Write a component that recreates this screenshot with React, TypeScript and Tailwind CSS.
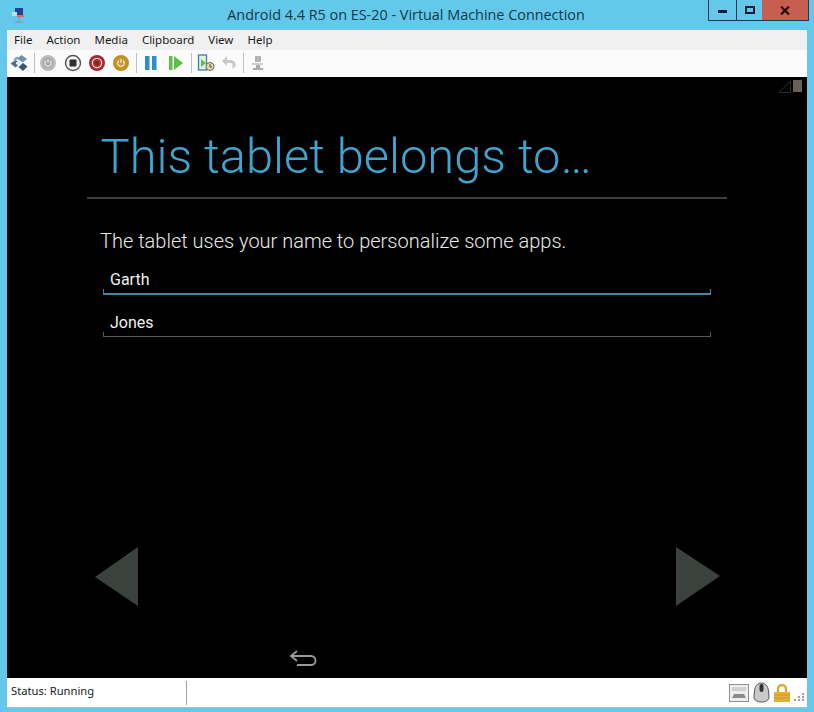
import React from 'react';

const menus = ['File', 'Action', 'Media', 'Clipboard', 'View', 'Help'];

function Separator() {
  return <div className="w-px h-[20px] bg-[#b9c4c9]" />;
}

function PowerIcon({ outer, inner, stroke }: { outer: string; inner: string; stroke: string }) {
  return (
    <svg width="18" height="18" viewBox="0 0 18 18">
      <circle cx="9" cy="9" r="8" fill={outer} />
      <circle cx="9" cy="9" r="5.5" fill={inner} />
      <path d="M6.8 6.8a3.2 3.2 0 1 0 4.4 0" fill="none" stroke={stroke} strokeWidth="1.2" />
      <path d="M9 5v4" stroke={stroke} strokeWidth="1.2" />
    </svg>
  );
}

function Toolbar() {
  return (
    <div className="h-[27px] flex items-center pl-[3px] pb-[2px] bg-[#fbfbfb]">
      {/* host */}
      <svg width="18" height="18" viewBox="0 0 18 18">
        <path d="M0.500 9.500l5-3.500 4.500 3.500-4.500 4z" fill="#4d7086" />
        <path d="M7 4.500l4.500-3.500 5.500 4-4.500 3.500z" fill="#6f95aa" />
        <path d="M8.500 13l4.500-4 4.500 3.500-4.500 4.500z" fill="#39586c" />
        <path d="M3.500 5L7 2.500l2 1.500-4 3z" fill="#86a6b8" />
        <path d="M6 8.500l2.500-1.500 2.500 2-2.500 2.500-2.500-1.500z" fill="#e6edf0" />
      </svg>
      <div className="ml-[6px] mr-[4px]"><Separator /></div>
      <div className="w-[18px] h-[18px]">
        <PowerIcon outer="#bdbdbd" inner="#a9a9a9" stroke="#e6e6e6" />
      </div>
      <div className="ml-[7px]">
        <svg width="18" height="18" viewBox="0 0 18 18">
          <circle cx="9" cy="9" r="7.500" fill="#f4f4f4" stroke="#555" strokeWidth="1.400" />
          <rect x="5.500" y="5.500" width="7" height="7" rx="1" fill="#2f2f2f" />
        </svg>
      </div>
      <div className="ml-[6px]">
        <svg width="18" height="18" viewBox="0 0 18 18">
          <circle cx="9" cy="9" r="8" fill="#a82a2a" />
          <circle cx="9" cy="9" r="4.600" fill="none" stroke="#f0dcdc" strokeWidth="1.300" />
          <circle cx="9" cy="9" r="2" fill="#8e1f1f" />
        </svg>
      </div>
      <div className="ml-[6px]">
        <PowerIcon outer="#c08f2b" inner="#c9992f" stroke="#f6ecc9" />
      </div>
      <div className="ml-[6px] mr-[7px]"><Separator /></div>
      <svg width="14" height="16" viewBox="0 0 14 16">
        <rect x="1" y="1" width="4.500" height="14" fill="#2f8fc4" />
        <rect x="8" y="1" width="4.500" height="14" fill="#2f8fc4" />
      </svg>
      <div className="ml-[10px]">
        <svg width="16" height="16" viewBox="0 0 16 16">
          <rect x="1" y="1" width="3.500" height="14" fill="#5cc04a" />
          <path d="M6 1l9 7-9 7z" fill="#5cc04a" />
        </svg>
      </div>
      <div className="ml-[7px] mr-[5px]"><Separator /></div>
      <svg width="18" height="18" viewBox="0 0 18 18">
        <rect x="1.500" y="1" width="8" height="15" fill="#e3f0ea" stroke="#3b7f9c" strokeWidth="1.300" />
        <path d="M4 5l5 4-5 4z" fill="#5cc04a" />
        <circle cx="13" cy="12.500" r="4" fill="#e3d9b8" stroke="#6b6b5b" />
        <path d="M13 10v3h2" fill="none" stroke="#444" />
      </svg>
      <div className="ml-[5px]">
        <svg width="18" height="18" viewBox="0 0 18 18">
          <path d="M7 2L2 7l5 5V9h3c2.500 0 3 2 2.500 6 3-2 4-3.500 3-6-.8-2-3-3-5.500-3H7z" fill="#c9c9c9" />
        </svg>
      </div>
      <div className="ml-[5px] mr-[5px]"><Separator /></div>
      <svg width="18" height="18" viewBox="0 0 18 18">
        <path d="M6 2h6v6H6z" fill="#b5b5b5" />
        <path d="M3 9h11v2H3z" fill="#cfcfcf" />
        <path d="M7 11h4v3h3v2H4v-2h3z" fill="#a9a9a9" />
      </svg>
    </div>
  );
}

function StatusIcons() {
  return (
    <div className="flex items-end gap-[3px] mr-[2px]">
      <svg width="20" height="20" viewBox="0 0 20 20" className="mr-[1px]">
        <rect x="0.500" y="1.500" width="19" height="17" fill="#eeeeee" stroke="#8f8f8f" />
        <path d="M3 4h14v4H3z" fill="#d0d0d0" />
        <path d="M5 11h10l2 4H3z" fill="#8a8a8a" />
      </svg>
      <svg width="17" height="21" viewBox="0 0 17 21">
        <path d="M8.500 1c4 0 6.500 3 7 8l.5 6c0 3-3 5-7.500 5S1 18 1 15l.5-6c.5-5 3-8 7-8z" fill="#c9c9c9" stroke="#555" />
        <rect x="6.500" y="2" width="4" height="8" rx="2" fill="#333" />
      </svg>
      <svg width="18" height="20" viewBox="0 0 18 20">
        <path d="M5 9V6a4 4 0 0 1 8 0v3" fill="none" stroke="#d9a92f" strokeWidth="2.400" />
        <rect x="1" y="9" width="16" height="10" fill="#e3b23a" />
        <path d="M1 12h16M1 15h16" stroke="#c8962a" />
      </svg>
      <div className="grid grid-cols-3 gap-[1px] w-[11px] mb-[2px]">
        <span /><span /><span className="w-[2px] h-[2px] bg-[#a0a0a0]" />
        <span /><span className="w-[2px] h-[2px] bg-[#a0a0a0]" /><span className="w-[2px] h-[2px] bg-[#a0a0a0]" />
        <span className="w-[2px] h-[2px] bg-[#a0a0a0]" /><span className="w-[2px] h-[2px] bg-[#a0a0a0]" /><span className="w-[2px] h-[2px] bg-[#a0a0a0]" />
      </div>
    </div>
  );
}

function NameField({ value, focused }: { value: string; focused?: boolean }) {
  const tick = focused ? 'bg-[#3d87ab]' : 'bg-[#5a5a5a]';
  return (
    <div
      className={
        'relative ml-[3px] w-[608px] h-[30px] pl-[7px] pt-[2px] flex items-center text-[16px] text-[#f0f0f0] ' +
        (focused ? 'border-b-2 border-[#3d87ab]' : 'border-b border-[#5a5a5a]')
      }
    >
      {value}
      <span className={'absolute left-0 bottom-0 w-px h-[4px] ' + tick} />
      <span className={'absolute right-0 bottom-0 w-px h-[4px] ' + tick} />
    </div>
  );
}

export default function App() {
  return (
    <div className="w-[814px] h-[712px] bg-[#64c8ea] flex flex-col overflow-hidden font-['Noto_Sans',sans-serif]">
      {/* title bar */}
      <div className="h-[30px] flex shrink-0">
        <div className="w-[708px] flex pl-[10px] pt-[7px]">
          <svg width="16" height="16" viewBox="0 0 16 16">
            <rect x="5" y="1" width="8" height="7" fill="#27408f" />
            <rect x="2" y="5" width="5" height="4" fill="#c9d7e6" />
            <rect x="7" y="8" width="7" height="2" fill="#d96a5c" />
            <path d="M9 10v5M5 15h8" stroke="#7f96a5" />
          </svg>
          <div className="flex-1 text-center text-[14.400px] leading-[15px] text-[#11394f] font-['Open_Sans',sans-serif] ml-[78px]">
            Android 4.4 R5 on ES-20 - Virtual Machine Connection
          </div>
        </div>
        <div className="h-[21px] flex border border-t-0 border-[#0f3d5c]">
          <div className="w-[28px] flex items-center justify-center border-r border-[#0f3d5c]">
            <div className="w-[9px] h-[3px] mt-[3px] bg-[#0b2036]" />
          </div>
          <div className="w-[25px] flex items-center justify-center">
            <div className="w-[10px] h-[8px] border-2 border-[#0b2036]" />
          </div>
          <div className="w-[46px] bg-[#c75f50] flex items-center justify-center">
            <svg width="10" height="9" viewBox="0 0 10 9">
              <path d="M1 0.500l8 8M9 0.500l-8 8" stroke="#2b0a08" strokeWidth="2.200" />
            </svg>
          </div>
        </div>
      </div>

      {/* window body */}
      <div className="mx-[7px] flex-1 flex flex-col">
        <div className="h-[20px] bg-[#f0f0f0] flex items-center pl-[7px] gap-[14px] text-[11.500px] text-[#1a1a1a]">
          {menus.map((m) => (
            <span key={m}>{m}</span>
          ))}
        </div>
        <Toolbar />

        {/* guest screen */}
        <div className="h-[601px] bg-black flex flex-col font-['Roboto',sans-serif]">
          <div className="h-[18px] flex justify-end items-start pt-[3px] pr-[5px] gap-[2px]">
            <svg width="13" height="13" viewBox="0 0 13 13">
              <path d="M1 12.500L12.500 1v11.500z" fill="none" stroke="#2c2c2c" />
            </svg>
            <div className="w-[9px] h-[12px] bg-[#6a605a]" />
          </div>
          <div className="pl-[80px] pr-[80px]">
            <div className="h-[104px] border-b-2 border-[#3f3f3f] pl-[13.500px] pt-[32px] text-[48.800px] leading-[60px] font-light text-[#3fa5cf]">
              This tablet belongs to…
            </div>
            <div className="pl-[13px] pt-[30px] text-[20px] leading-[24px] font-light text-[#e8e8e8]">
              The tablet uses your name to personalize some apps.
            </div>
            <div className="pl-[13px] mt-[7px]">
              <div className="h-[5px]" />
              <NameField value="Garth" focused />
              <div className="h-[12px]" />
              <NameField value="Jones" />
            </div>
          </div>

          <div className="mt-[210px] pl-[88px] pr-[87px] flex justify-between">
            <svg width="43" height="59" viewBox="0 0 43 59">
              <path d="M43 0v59L0 30z" fill="#3b423e" />
            </svg>
            <svg width="44" height="59" viewBox="0 0 44 59">
              <path d="M0 0v59l44-30z" fill="#3b423e" />
            </svg>
          </div>
          <div className="mt-[44px] pl-[282px]">
            <svg width="28" height="17" viewBox="0 0 28 17" fill="none" stroke="#9a9a9a" strokeWidth="1.800">
              <path d="M8 1L2 6l6 5" />
              <path d="M2 6h20c6 0 6 9 0 9H8" />
            </svg>
          </div>
        </div>

        {/* status bar */}
        <div className="h-[30px] bg-white border-b border-[#aebcc4] flex items-center text-[11.200px] text-[#1a1a1a]">
          <div className="w-[180px] h-[24px] pl-[4px] pb-[2px] flex items-center border-r border-[#a0a0a0]">Status: Running</div>
          <div className="flex-1" />
          <StatusIcons />
        </div>
      </div>
      <div className="h-[4px] shrink-0" />
    </div>
  );
}
